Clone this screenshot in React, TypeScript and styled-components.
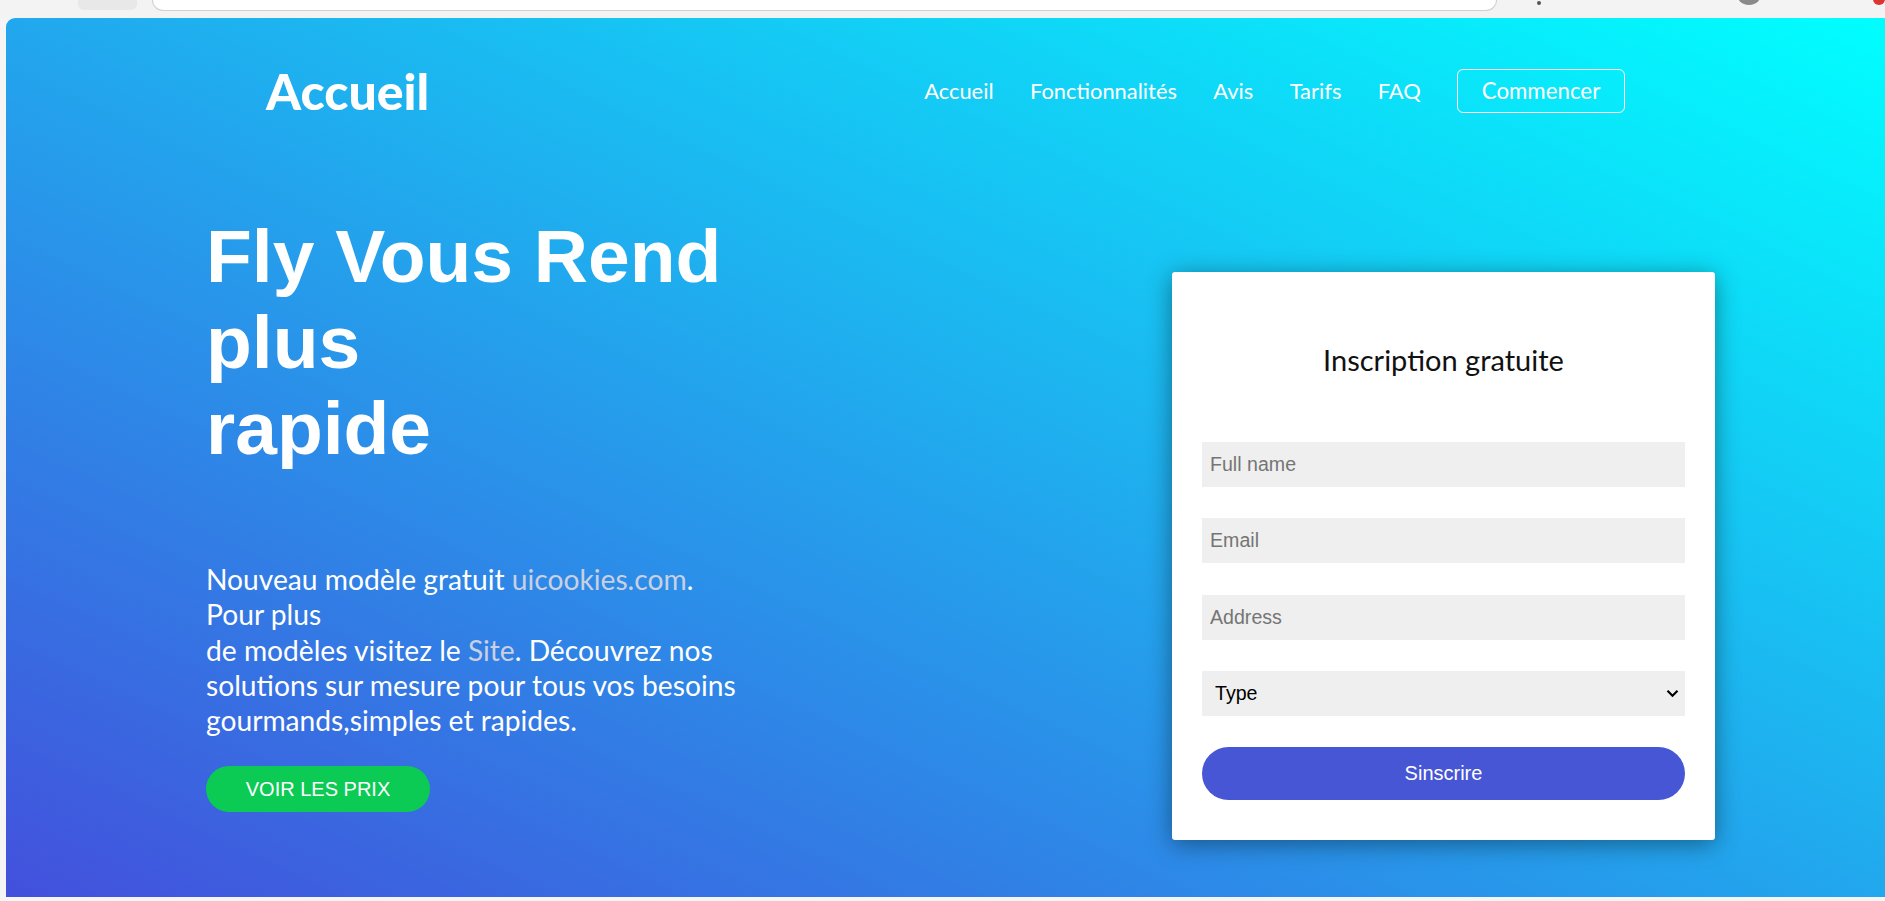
import React from "react";
import styled, { createGlobalStyle } from "styled-components";

const Global = createGlobalStyle`
  html, body {
    margin: 0;
    padding: 0;
    background: #f5f5f5;
  }
  #root {
    min-height: 901px;
  }
  * {
    box-sizing: border-box;
  }
`;

const Chrome = styled.div`
  height: 18px;
  display: flex;
  align-items: flex-start;
  overflow: hidden;
  background: #f3f3f3;
`;

const Tab = styled.div`
  margin-left: 78px;
  width: 59px;
  height: 10px;
  background: #e8e8e8;
  border-radius: 0 0 6px 6px;
`;

const Address = styled.div`
  margin-left: 15px;
  width: 1348px;
  height: 11px;
  background: #ffffff;
  border: 1px solid #d0d0d0;
  border-top: none;
  border-radius: 0 0 14px 14px;
`;

const ChromeDot = styled.div<{ $size: number; $color: string; $left: number }>`
  margin-left: ${(p) => p.$left}px;
  margin-top: ${(p) => 5 - p.$size}px;
  width: ${(p) => p.$size}px;
  height: ${(p) => p.$size}px;
  border-radius: 50%;
  background: ${(p) => p.$color};
  flex-shrink: 0;
`;

const Page = styled.main`
  margin-left: 6px;
  height: 879px;
  border-top-left-radius: 9px;
  background: linear-gradient(to top right, #4350dc 0%, #00ffff 100%);
  display: flex;
  flex-direction: column;
  overflow: hidden;
`;

const Header = styled.header`
  display: flex;
  align-items: center;
  justify-content: space-between;
  height: 145px;
  padding: 50px 260px 50px 260px;
`;

const Logo = styled.div`
  font-family: Lato, "Open Sans", sans-serif;
  font-weight: 900;
  font-size: 50px;
  line-height: 1;
  color: #ffffff;
`;

const Nav = styled.nav`
  display: flex;
  align-items: center;
`;

const NavLink = styled.a`
  font-family: Lato, "Open Sans", sans-serif;
  font-size: 21.9px;
  color: #ffffff;
  text-decoration: none;
  padding: 0 18.2px;
`;

const NavButton = styled.a`
  margin-left: 18px;
  height: 44px;
  width: 168px;
  display: flex;
  align-items: center;
  justify-content: center;
  border: 1px solid #ffffff;
  border-radius: 6px;
  font-family: Lato, "Open Sans", sans-serif;
  font-size: 22.3px;
  color: #ffffff;
  text-decoration: none;
`;

const Hero = styled.section`
  display: flex;
  justify-content: space-between;
  align-items: flex-start;
  padding: 50px 170px 0 200px;
`;

const Intro = styled.div`
  display: flex;
  flex-direction: column;
  align-items: flex-start;
`;

const Title = styled.h1`
  margin: 0;
  font-family: "Liberation Sans", Arial, sans-serif;
  font-weight: 700;
  font-size: 75px;
  line-height: 86px;
  color: #ffffff;
`;

const Lede = styled.p`
  margin: 91px 0 0;
  font-family: Lato, "Open Sans", sans-serif;
  font-size: 28.2px;
  line-height: 35.3px;
  color: #ffffff;
`;

const SoftLink = styled.a`
  color: #c9d0e2;
  text-decoration: none;
`;

const PriceButton = styled.button`
  margin-top: 28px;
  width: 224px;
  height: 46px;
  border: none;
  border-radius: 23px;
  background: #0bcb55;
  color: #ffffff;
  font-family: "Liberation Sans", Arial, sans-serif;
  font-size: 20px;
  text-transform: uppercase;
`;

const Card = styled.div`
  margin-top: 59px;
  width: 543px;
  height: 568px;
  padding: 0 30px;
  background: #ffffff;
  border-radius: 3px;
  box-shadow: 0 4px 24px rgba(0, 0, 0, 0.42);
  display: flex;
  flex-direction: column;
`;

const CardTitle = styled.h2`
  margin: 70px 0 0;
  text-align: center;
  font-family: Lato, "Open Sans", sans-serif;
  font-weight: 400;
  font-size: 29px;
  line-height: 36px;
  color: #111111;
`;

const Form = styled.form`
  margin-top: 64px;
  display: flex;
  flex-direction: column;
  gap: 31.3px;
`;

const Field = styled.input`
  height: 45px;
  border: none;
  outline: none;
  background: #efefef;
  padding: 0 8px;
  font-family: "Liberation Sans", Arial, sans-serif;
  font-size: 19.6px;
  color: #222;
  &::placeholder {
    color: #757575;
  }
`;

const SelectWrap = styled.div`
  position: relative;
  height: 45px;
`;

const Select = styled.select`
  appearance: none;
  -webkit-appearance: none;
  width: 100%;
  height: 45px;
  border: none;
  outline: none;
  background-color: #efefef;
  padding: 0 36px 0 13px;
  font-family: "Liberation Sans", Arial, sans-serif;
  font-size: 19.6px;
  color: #000000;
`;

const Chevron = styled.svg`
  position: absolute;
  right: 6px;
  top: 18px;
  width: 13px;
  height: 9px;
  pointer-events: none;
`;

const Submit = styled.button`
  height: 53px;
  border: none;
  border-radius: 27px;
  background: #4656d5;
  color: #ffffff;
  font-family: "Liberation Sans", Arial, sans-serif;
  font-size: 20px;
`;

export default function App() {
  return (
    <>
      <Global />
      <Chrome>
        <Tab />
        <Address />
        <ChromeDot $size={4} $color="#555" $left={40} />
        <ChromeDot $size={26} $color="#8a8a8a" $left={195} />
        <ChromeDot $size={12} $color="#d33" $left={111} />
      </Chrome>
      <Page>
        <Header>
          <Logo>Accueil</Logo>
          <Nav>
            <NavLink href="#">Accueil</NavLink>
            <NavLink href="#">Fonctionnalités</NavLink>
            <NavLink href="#">Avis</NavLink>
            <NavLink href="#">Tarifs</NavLink>
            <NavLink href="#">FAQ</NavLink>
            <NavButton href="#">Commencer</NavButton>
          </Nav>
        </Header>
        <Hero>
          <Intro>
            <Title>
              Fly Vous Rend
              <br />
              plus
              <br />
              rapide
            </Title>
            <Lede>
              Nouveau modèle gratuit <SoftLink href="#">uicookies.com</SoftLink>.
              <br />
              Pour plus
              <br />
              de modèles visitez le <SoftLink href="#">Site</SoftLink>. Découvrez nos
              <br />
              solutions sur mesure pour tous vos besoins
              <br />
              gourmands,simples et rapides.
            </Lede>
            <PriceButton type="button">Voir les prix</PriceButton>
          </Intro>
          <Card>
            <CardTitle>Inscription gratuite</CardTitle>
            <Form onSubmit={(e) => e.preventDefault()}>
              <Field type="text" placeholder="Full name" />
              <Field type="email" placeholder="Email" />
              <Field type="text" placeholder="Address" />
              <SelectWrap>
                <Select defaultValue="">
                  <option value="">Type</option>
                  <option value="a">Particulier</option>
                  <option value="b">Entreprise</option>
                </Select>
                <Chevron viewBox="0 0 13 9">
                  <path d="M1.5 1.8 L6.5 6.8 L11.5 1.8" fill="none" stroke="#000" strokeWidth="2.2" />
                </Chevron>
              </SelectWrap>
              <Submit type="submit">Sinscrire</Submit>
            </Form>
          </Card>
        </Hero>
      </Page>
    </>
  );
}
